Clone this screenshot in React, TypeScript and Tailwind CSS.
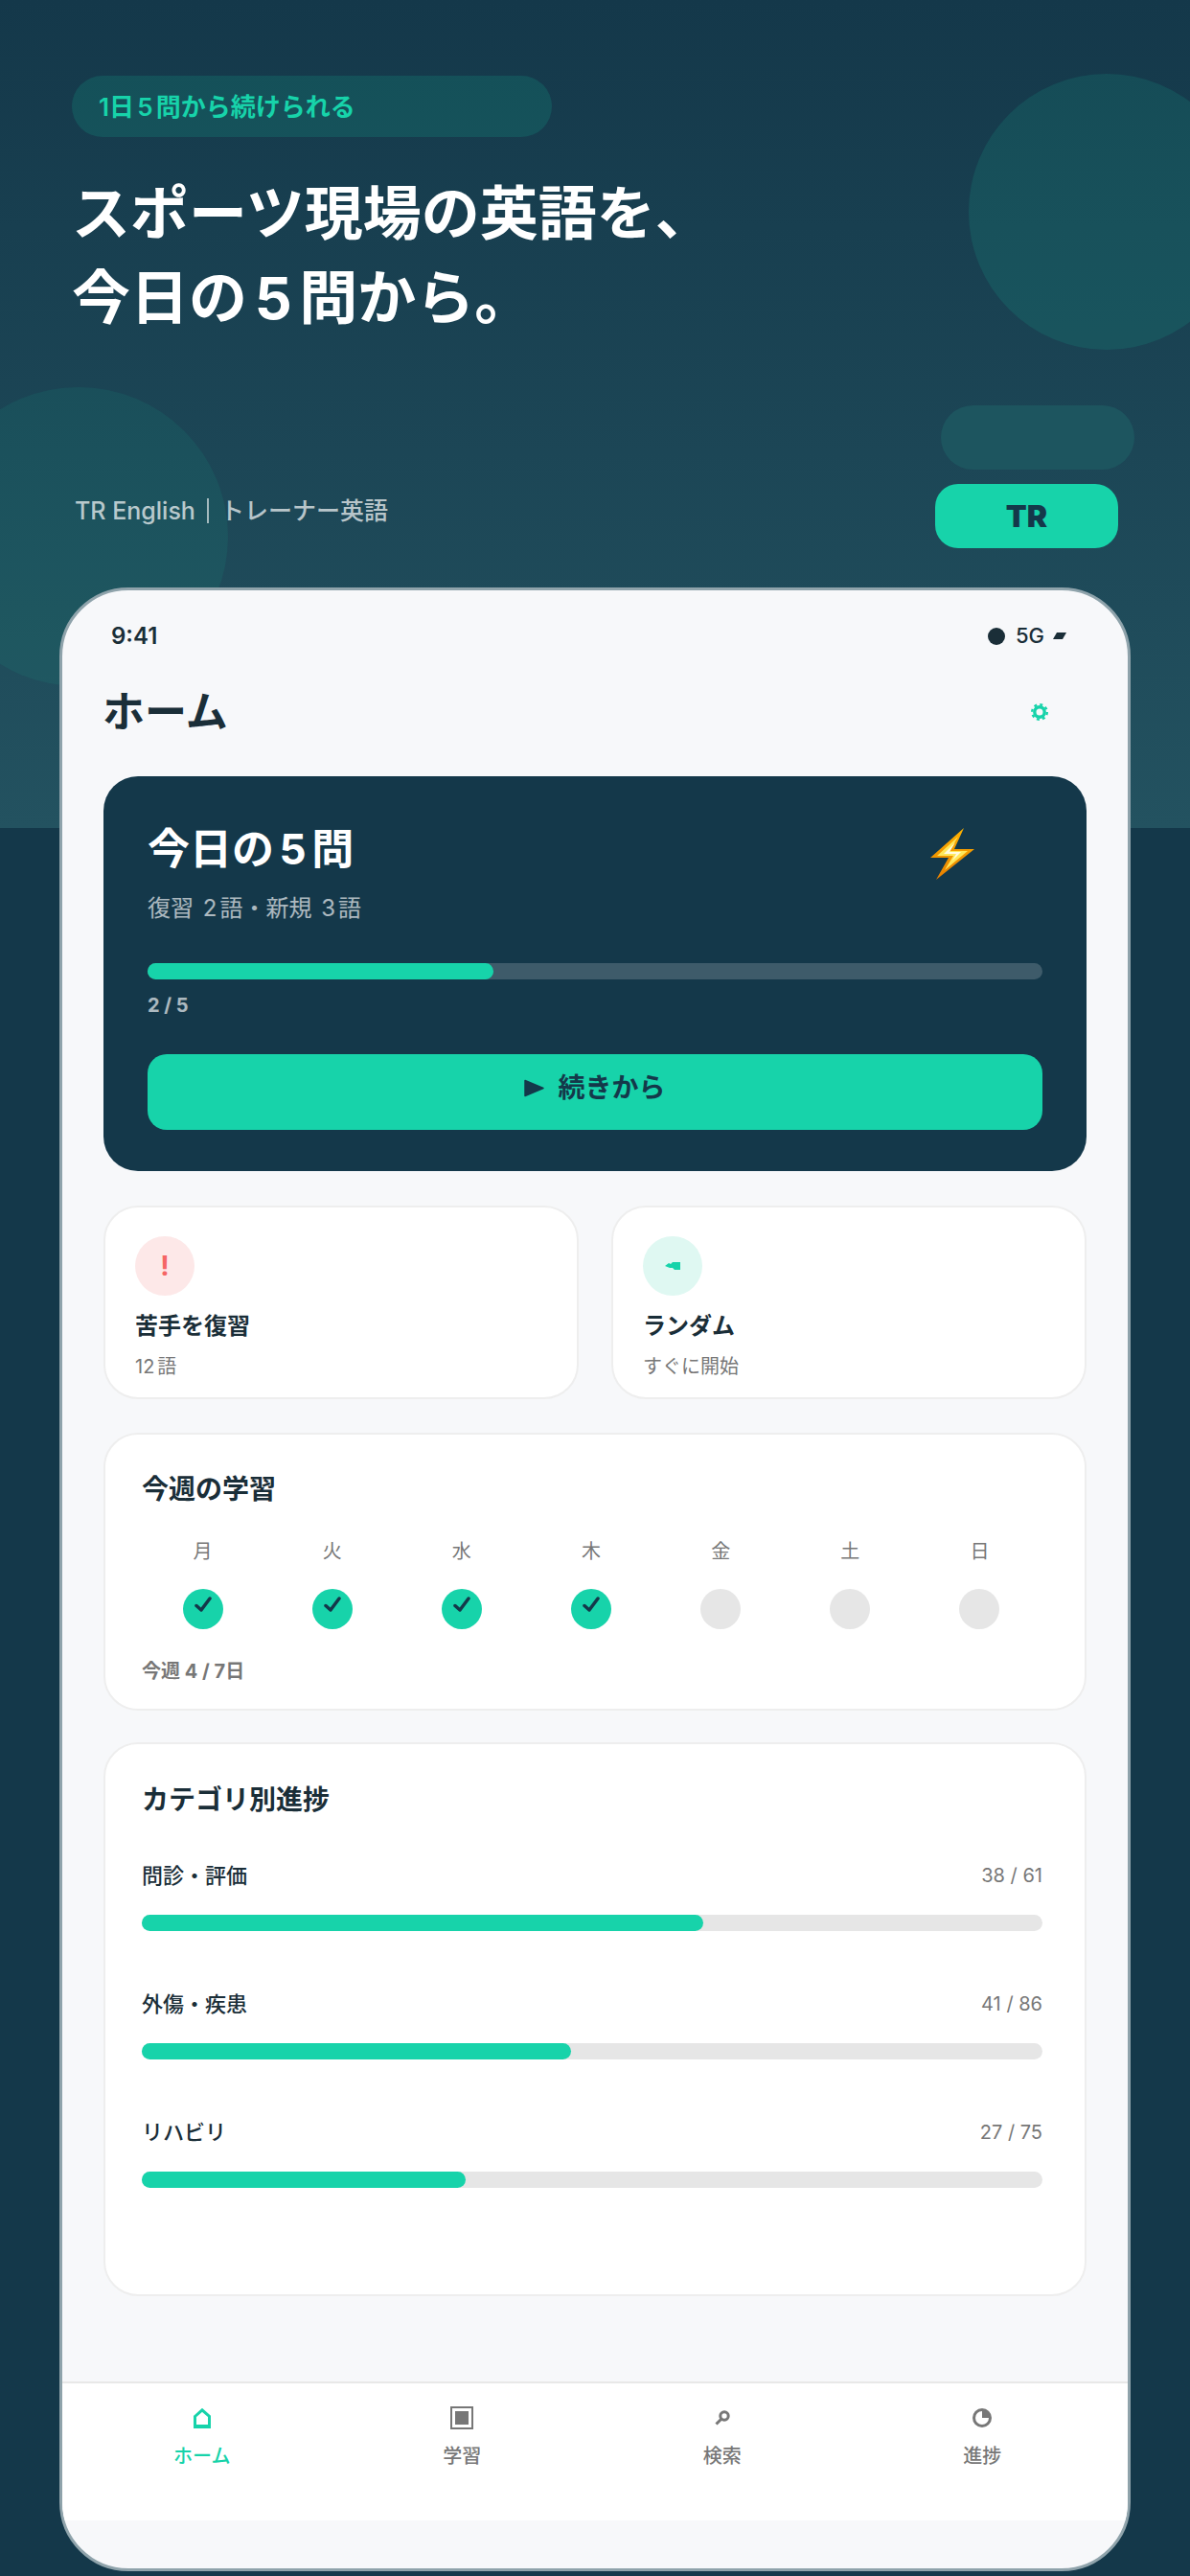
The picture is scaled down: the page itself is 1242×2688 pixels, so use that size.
const font = "font-['Inter','Noto_Sans_CJK_JP',sans-serif]"

const days = [
  { label: '月', done: true },
  { label: '火', done: true },
  { label: '水', done: true },
  { label: '木', done: true },
  { label: '金', done: false },
  { label: '土', done: false },
  { label: '日', done: false },
]

const categories = [
  { label: '問診・評価', done: 38, total: 61 },
  { label: '外傷・疾患', done: 41, total: 86 },
  { label: 'リハビリ', done: 27, total: 75 },
]

function Num({ children }: { children: React.ReactNode }) {
  return <span className="mx-[0.125em]">{children}</span>
}

function HomeIcon() {
  return (
    <svg width="18" height="21" viewBox="0 0 18 21" fill="none">
      <path d="M1.5 8.5 9 1.8l7.500 6.700V19.500H1.500Z" stroke="currentColor" strokeWidth="3" />
      <path d="M1 17h16v3.500H1Z" fill="currentColor" />
    </svg>
  )
}

function StudyIcon() {
  return (
    <svg width="24" height="24" viewBox="0 0 24 24" fill="none">
      <rect x="1" y="1" width="22" height="22" stroke="currentColor" strokeWidth="2" />
      <rect x="5" y="5" width="14" height="14" fill="currentColor" />
    </svg>
  )
}

function SearchIcon() {
  return (
    <svg width="16" height="16" viewBox="0 0 16 16" fill="none">
      <circle cx="10" cy="6" r="4.200" stroke="currentColor" strokeWidth="3" />
      <path d="M6.500 9.500 1.500 14.500" stroke="currentColor" strokeWidth="3" />
    </svg>
  )
}

function PieIcon() {
  return (
    <svg width="20" height="20" viewBox="0 0 20 20" fill="none">
      <circle cx="10" cy="10" r="8.500" stroke="currentColor" strokeWidth="3" />
      <path d="M10 10V1a9 9 0 0 1 9 9Z" fill="currentColor" />
    </svg>
  )
}

const tabs = [
  { icon: <HomeIcon />, label: 'ホーム', active: true },
  { icon: <StudyIcon />, label: '学習', active: false },
  { icon: <SearchIcon />, label: '検索', active: false },
  { icon: <PieIcon />, label: '進捗', active: false },
]

function Gear() {
  return (
    <svg width="18" height="18" viewBox="0 0 18 18" fill="none" className="text-[#17d3aa]">
      <circle cx="9" cy="9" r="5.200" stroke="currentColor" strokeWidth="3.400" />
      <circle cx="9" cy="9" r="7.800" stroke="currentColor" strokeWidth="2.400" strokeDasharray="3 3.130" />
    </svg>
  )
}

function Bolt() {
  return (
    <svg width="46" height="54" viewBox="0 0 46 54">
      <defs>
        <linearGradient id="boltEdge" x1="0" y1="0" x2="0" y2="1">
          <stop offset="0" stopColor="#ffb300" />
          <stop offset="1" stopColor="#e67e00" />
        </linearGradient>
      </defs>
      <path d="M35 0 0 31h19L6 54 46 22H25Z" fill="url(#boltEdge)" />
      <path d="M29 9 7 29h17L15 44 39 24H20Z" fill="#ffe75a" />
      <path d="M26 15 14 27h13l-4 7 9-9H20Z" fill="#fffbe0" />
    </svg>
  )
}

function ActionCard(props: { icon: React.ReactNode; iconClass: string; title: string; sub: React.ReactNode }) {
  return (
    <div className="flex-1 h-[202px] rounded-[36px] border-2 border-[#eeeeee] bg-white pl-[31px] pt-[30px]">
      <div className={`w-[62px] h-[62px] rounded-full flex items-center justify-center ${props.iconClass}`}>
        {props.icon}
      </div>
      <div className="mt-[14px] text-[24px] leading-[36px] font-bold text-[#1a2e38]">{props.title}</div>
      <div className="mt-[9px] text-[20px] leading-[30px] text-[#777777]">{props.sub}</div>
    </div>
  )
}

export default function App() {
  return (
    <div className={`relative w-[1242px] h-[2688px] overflow-hidden bg-[#14384a] ${font}`}>
      {/* ヒーロー背景 */}
      <div className="absolute top-0 left-0 w-full h-[864px] bg-gradient-to-b from-[#14384a] to-[#235260]" />
      <div className="absolute left-[1011px] top-[77px] w-[288px] h-[288px] rounded-full bg-[#17d3aa]/12" />
      <div className="absolute left-[-74px] top-[404px] w-[312px] h-[312px] rounded-full bg-[#17d3aa]/8" />

      <div className="relative px-[62px] pt-[79px]">
        {/* ヒーロー */}
        <div className="ml-[13px] w-[501px] h-[64px] rounded-full bg-[#17d3aa]/15 pl-[28px] flex items-center text-[26px] font-semibold text-[#17d3aa]">
          1日<Num>5</Num>問から続けられる
        </div>
        <h1 className="ml-[13px] mt-[36px] text-[61px] leading-[88px] font-bold text-white">
          スポーツ現場の英語を、
          <br />
          今日の<Num>5</Num>問から。
        </h1>
        <div className="mt-[68px] flex justify-between h-[149px]">
          <div className="ml-[16px] mt-[92px] flex items-center h-[36px] text-[25px] leading-[36px] font-medium text-white/70">
            <span>TR English</span>
            <span className="mx-[12px] w-[2px] h-[26px] bg-white/60" />
            <span>トレーナー英語</span>
          </div>
          <div className="relative w-[208px] -mr-[4px]">
            <div className="ml-[6px] w-[202px] h-[67px] rounded-full bg-[#1d555f]" />
            <div className="absolute left-0 top-[82px] w-[191px] h-[67px] rounded-[24px] bg-[#17d3aa] flex items-center justify-center text-[32px] font-black text-[#14384a]">
              TR
            </div>
          </div>
        </div>

        {/* スマホ枠 */}
        <div className="mt-[41px] w-[1118px] h-[2070px] rounded-[72px] border-[3px] border-[#8fa3ab] bg-[#f7f8fa] overflow-hidden flex flex-col">
          <div className="h-[70px] pl-[51px] pr-[50px] pt-[25px] flex items-center justify-between text-[#1a2e38]">
            <span className="text-[24px] font-semibold">9:41</span>
            <div className="flex items-center gap-[11px] text-[22px] font-medium mr-[14px]">
              <span className="-mr-[2px] w-[18px] h-[18px] rounded-full bg-[#1a2e38]" />
              <span className="ml-[2px] -mr-[2px]">5G</span>
              <svg width="14" height="7" viewBox="0 0 14 7">
                <path d="M4 0h10l-4 7H0Z" fill="currentColor" />
              </svg>
            </div>
          </div>
          <div className="mt-[18px] -mb-[1px] pl-[42px] pr-[43px] flex items-center justify-between h-[78px]">
            <span className="text-[44px] font-bold text-[#1a2e38]">ホーム</span>
            <span className="mr-[40px]">
              <Gear />
            </span>
          </div>

          <div className="px-[43px] flex flex-col">
            {/* 今日の5問 */}
            <div className="mt-[29px] h-[412px] rounded-[36px] bg-[#14384a] pl-[46px] pr-[46px] pt-[41px]">
              <div className="flex justify-between">
                <span className="text-[44px] leading-[70px] font-bold text-white">
                  今日の<Num>5</Num>問
                </span>
                <span className="mr-[71px] mt-[13px]">
                  <Bolt />
                </span>
              </div>
              <div className="mt-[9px] text-[24px] leading-[36px] text-white/65">
                復習 <Num>2</Num>語・新規 <Num>3</Num>語
              </div>
              <div className="mt-[39px] h-[17px] rounded-full bg-white/18">
                <div className="h-full rounded-full bg-[#17d3aa]" style={{ width: '38.6%' }} />
              </div>
              <div className="mt-[12px] text-[20px] leading-[30px] font-bold text-white/65">2 / 5</div>
              <div className="mt-[36px] h-[79px] rounded-[20px] bg-[#17d3aa] flex items-center justify-center gap-[14px] text-[28px] font-semibold text-[#14384a]">
                <svg width="21" height="19" viewBox="0 0 21 19" className="-mt-[9px]">
                  <path d="M1 1.500v16L20 9.500Z" fill="currentColor" stroke="currentColor" strokeWidth="1.500" strokeLinejoin="round" />
                </svg>
                <span className="-mt-[9px]">続きから</span>
              </div>
            </div>

            <div className="mt-[36px] flex gap-[34px]">
              <ActionCard
                icon="!"
                iconClass="bg-[#fde8e8] text-[#f56565] text-[28px] font-bold"
                title="苦手を復習"
                sub={<>12<span className="ml-[3px]">語</span></>}
              />
              <ActionCard
                icon={
                  <svg width="16" height="8" viewBox="0 0 16 8">
                    <path d="M0 4 4 1l2 1 2-2h8v8H10L8 6H5Z" fill="currentColor" />
                  </svg>
                }
                iconClass="bg-[#dff8f2] text-[#17d3aa]"
                title="ランダム"
                sub="すぐに開始"
              />
            </div>

            {/* 今週の学習 */}
            <div className="mt-[35px] h-[290px] rounded-[36px] border-2 border-[#eeeeee] bg-white pl-[38px] pr-[44px] pt-[37px]">
              <div className="text-[28px] leading-[40px] font-bold text-[#1a2e38]">今週の学習</div>
              <div className="mt-[30px] -ml-[4px] -mr-[2px] grid grid-cols-7">
                {days.map((d) => (
                  <div key={d.label} className="flex flex-col items-center">
                    <span className="text-[20px] leading-[30px] text-[#777777]">{d.label}</span>
                    <span className={`mt-[24px] w-[42px] h-[42px] rounded-full flex items-center justify-center ${d.done ? 'bg-[#17d3aa]' : 'bg-[#e6e6e6]'}`}>
                      {d.done && (
                        <svg width="18" height="17" viewBox="0 0 18 17" fill="none" className="-mt-[10px]">
                          <path d="M2 9.500 7 14 16 2" stroke="#14384a" strokeWidth="3.500" strokeLinecap="round" strokeLinejoin="round" />
                        </svg>
                      )}
                    </span>
                  </div>
                ))}
              </div>
              <div className="mt-[29px] text-[20px] leading-[30px] font-bold text-[#777777]">今週 4 / 7日</div>
            </div>

            {/* カテゴリ別進捗 */}
            <div className="mt-[33px] h-[578px] rounded-[36px] border-2 border-[#eeeeee] bg-white pl-[38px] pr-[44px] pt-[38px]">
              <div className="text-[28px] leading-[40px] font-bold text-[#1a2e38]">カテゴリ別進捗</div>
              <div className="mt-[41px] flex flex-col gap-[58px]">
                {categories.map((c) => (
                  <div key={c.label}>
                    <div className="flex justify-between items-center h-[36px]">
                      <span className="text-[22px] font-medium text-[#1a2e38]">{c.label}</span>
                      <span className="text-[20px] text-[#777777]">{c.done} / {c.total}</span>
                    </div>
                    <div className="mt-[23px] h-[17px] rounded-full bg-[#e6e6e6]">
                      <div className="h-full rounded-full bg-[#17d3aa]" style={{ width: `${(c.done / c.total) * 100}%` }} />
                    </div>
                  </div>
                ))}
              </div>
            </div>
          </div>

          {/* タブバー */}
          <div className="mt-[89px] h-[145px] border-t-2 border-[#e8e8e8] bg-white pl-[10px] pr-[16px] grid grid-cols-4 pt-[16px]">
            {tabs.map((t) => (
              <div key={t.label} className={`flex flex-col items-center ${t.active ? 'text-[#17d3aa]' : 'text-[#777777]'}`}>
                <span className="h-[40px] flex items-center justify-center">{t.icon}</span>
                <span className="mt-[6px] text-[20px] leading-[28px] font-medium">{t.label}</span>
              </div>
            ))}
          </div>
        </div>
      </div>
    </div>
  )
}
